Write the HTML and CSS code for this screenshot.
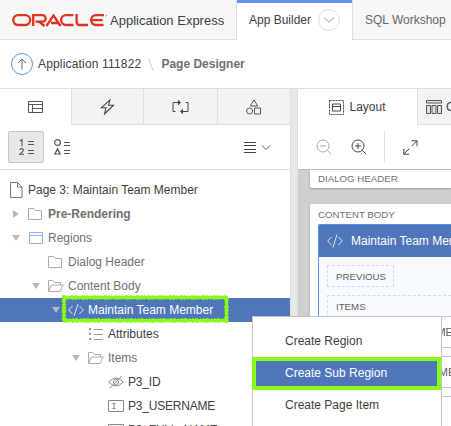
FILE: index.html
```html
<!DOCTYPE html>
<html lang="en">
<head>
<meta charset="utf-8">
<title>Page Designer</title>
<link rel="stylesheet" href="styles.css">
</head>
<body>
<div class="app">
<header class="topbar">
  <div class="brand">
    <svg class="logo" width="96" height="13" viewBox="0 0 96 13" role="img" aria-label="Oracle"><g fill="none" stroke="#e1301e" stroke-width="2.3"><rect x="1.2" y="1.2" width="17" height="9.8" rx="4.9"/><path d="M21.2 12V1.2H30.5a2.9 2.9 0 0 1 0 6.4H23.5M27 7.6L32.5 12"/><path d="M34.5 12L41.5 1.4L48.5 12M39 9H47"/><path d="M61.5 1.2H54a4.9 4.9 0 0 0 0 9.8h7.5"/><path d="M64.6 0V8a3 3 0 0 0 3 3H76"/><path d="M92 1.2H84a4.9 4.9 0 0 0 0 9.8H91.5M80 6.1H90.5"/></g><circle cx="94.4" cy="1.5" r=".9" fill="#e8968e"/></svg>
    <span class="product">Application Express</span>
  </div>
  <nav class="nav">
    <div class="nav-tab active">App Builder<span class="round"><svg width="12" height="8" viewBox="0 0 12 8"><path d="M1 1.5L6 6L11 1.5" fill="none" stroke="#999"/></svg></span></div>
    <div class="nav-tab">SQL Workshop</div>
  </nav>
</header>
<div class="crumbs">
  <span class="up"><svg width="10" height="12" viewBox="0 0 10 12"><path d="M5 11.5V1M1 5L5 1L9 5" fill="none" stroke="#666"/></svg></span>
  <span class="crumb-app">Application 111822</span>
  <svg class="slash" width="6" height="13" viewBox="0 0 6 13"><path d="M.7 .5L5 12.5" stroke="#ccc"/></svg>
  <b>Page Designer</b>
</div>
<main class="panes">
  <section class="left">
    <div class="tabs">
      <div class="tab on"><svg width="15" height="12" viewBox="0 0 15 12"><path d="M.5 .5h14v11H.5zM.5 3.5h14M4.5 3.5v8M4.5 7.5h10" fill="none" stroke="#555"/></svg></div>
      <div class="tab"><svg width="15" height="16" viewBox="0 0 15 16"><path d="M10 .8L1.2 8.8L6 8.8L4.5 15L13.5 6.2H8.6z" fill="none" stroke="#444" stroke-width="1.1"/></svg></div>
      <div class="tab"><svg width="17" height="16" viewBox="0 0 17 16"><path d="M3.5 12.5H1V3.5H7M13.5 3.5H16V12.5H10" fill="none" stroke="#444"/><path d="M6 .8L9 3.5L6 6.2zM11 9.8L8 12.5L11 15.2z" fill="#444"/></svg></div>
      <div class="tab"><svg width="16" height="16" viewBox="0 0 16 16"><path d="M8 1L11.8 7H4.2zM8.5 9h6v6h-6z" fill="none" stroke="#555"/><circle cx="3.6" cy="12" r="3" fill="none" stroke="#555"/></svg></div>
    </div>
    <div class="tools">
      <span class="pressed"><svg width="16" height="18" viewBox="0 0 16 18"><path d="M9 3.5h6M9 6.5h6M9 12.5h6M9 15.5h6" stroke="#555"/><path d="M1 3L3 1.6V8.4M.8 11.9Q1.2 10.6 2.7 10.6Q4.6 10.6 4.3 12.4Q4 13.8 .8 16.2H5" fill="none" stroke="#555" stroke-width="1.1"/></svg></span>
      <svg class="kinds" width="16" height="18" viewBox="0 0 16 18"><path d="M10 4.5h6M10 7.5h6M10 12.5h6M10 15.5h6" stroke="#555"/><circle cx="3.5" cy="4.5" r="2.9" fill="none" stroke="#555" stroke-width="1.2"/><path d="M3.5 10.7L6.2 16H.8z" fill="none" stroke="#555" stroke-width="1.2"/></svg>
      <svg class="menu-icon" width="27" height="11" viewBox="0 0 27 11"><path d="M0 .5h12M0 3.5h12M0 7.5h12M0 10.5h12" stroke="#444"/><path d="M18 3.5L22 7.5L26 3.5" fill="none" stroke="#555"/></svg>
    </div>
    <div class="tree">
      <div class="row root dark"><svg class="file" width="13" height="16" viewBox="0 0 13 16"><path d="M.5 .5h7l4.5 4.5v10.5H.5zM7.5 .5V5H12" fill="none" stroke="#777"/></svg>Page 3: Maintain Team Member</div>
      <div class="row l1"><i class="arrow shut"></i><svg class="ico" width="16" height="14" viewBox="0 0 16 14"><path d="M.5 1.5h5l2 2h6v9H.5z" fill="none" stroke="#aaa"/></svg><b>Pre-Rendering</b></div>
      <div class="row l1"><i class="arrow"></i><svg class="ico" width="16" height="14" viewBox="0 0 16 14"><path d="M1.5 1.5h13v11h-13zM1.5 4.5h13" fill="none" stroke="#8fb2ee"/></svg>Regions</div>
      <div class="row l2"><i class="arrow none"></i><svg class="ico" width="16" height="14" viewBox="0 0 16 14"><path d="M.5 1.5h5l2 2h6v9H.5z" fill="none" stroke="#aaa"/></svg>Dialog Header</div>
      <div class="row l2"><i class="arrow"></i><svg class="ico" width="16" height="14" viewBox="0 0 16 14"><path d="M.5 12.5v-11h4l2 2h6v2.5M.5 12.5L3.5 6h11.5L12 12.5z" fill="none" stroke="#aaa"/></svg>Content Body</div>
      <div class="row l3 selected"><i class="arrow"></i><svg class="ico" width="16" height="14" viewBox="0 0 16 14"><path d="M4.5 3L.7 7L4.5 11M11.5 3L15.3 7L11.5 11M10 1L6 13" fill="none" stroke="#dce7fb"/></svg>Maintain Team Member
        <svg class="marker" width="170" height="30" viewBox="0 0 170 30"><g fill="none" stroke="#88fb18"><rect x="3" y="3.5" width="162.5" height="23" stroke-width="3"/><rect x="3" y="3.5" width="162.5" height="23" stroke-width="4.4" stroke-dasharray="2 1.6 1 2.3 3 1"/></g></svg></div>
      <div class="row l4 dark"><i class="arrow none"></i><svg class="ico" width="16" height="14" viewBox="0 0 16 14"><path d="M6 2.5h9M6 7.5h9M6 12.5h9" stroke="#999"/><path d="M1 2h2M1 7h2M1 12h2" stroke="#999" stroke-width="2"/></svg>Attributes</div>
      <div class="row l4"><i class="arrow"></i><svg class="ico" width="16" height="14" viewBox="0 0 16 14"><path d="M.5 12.5v-11h4l2 2h6v2.5M.5 12.5L3.5 6h11.5L12 12.5z" fill="none" stroke="#aaa"/></svg>Items</div>
      <div class="row l5 dark"><i class="arrow none"></i><svg class="ico" width="16" height="14" viewBox="0 0 16 14"><path d="M.7 7Q8-1 15.3 7Q8 15 .7 7zM14 .8L2 13.2" fill="none" stroke="#888"/><circle cx="8" cy="7" r="2.5" fill="none" stroke="#888"/></svg>P3_ID</div>
      <div class="row l5 dark"><i class="arrow none"></i><svg class="ico" width="16" height="14" viewBox="0 0 16 14"><path d="M.5 1.5h15v11H.5zM4.5 4.5h3M6 4.5v5M4.5 9.5h3" fill="none" stroke="#888"/></svg>P3_USERNAME</div>
      <div class="row l5 dark"><i class="arrow none"></i><svg class="ico" width="16" height="14" viewBox="0 0 16 14"><path d="M.5 1.5h15v11H.5z" fill="none" stroke="#888"/></svg>P3_FULL_NAME</div>
    </div>
  </section>
  <div class="splitter"></div>
  <section class="right">
    <div class="tabs">
      <div class="tab on layout"><svg width="15" height="15" viewBox="0 0 15 15"><rect x=".5" y=".5" width="14" height="14" fill="none" stroke="#444" stroke-dasharray="2 1"/><path d="M3.5 4h8v7h-8zM3.5 6.5h8" fill="none" stroke="#444"/></svg>Layout</div>
      <div class="tab comp"><svg width="17" height="15" viewBox="0 0 17 15"><path d="M.5 1.5h15v2.5H.5zM.5 6.5h4v8h-4zM6 6.5h4v8H6zM11.5 6.5h4v8h-4z" fill="#dfe3df" stroke="#555"/></svg>Component View</div>
    </div>
    <div class="tools">
      <svg class="zoom-out" width="16" height="16" viewBox="0 0 16 16"><circle cx="7" cy="7" r="6" fill="none" stroke="#aaa"/><path d="M4 7h6M11.2 11.2L15.3 15.3" stroke="#aaa"/></svg>
      <svg class="zoom-in" width="16" height="16" viewBox="0 0 16 16"><circle cx="7" cy="7" r="6" fill="none" stroke="#444"/><path d="M4 7h6M7 4v6M11.2 11.2L15.3 15.3" stroke="#444"/></svg>
      <i class="rule"></i>
      <svg class="expand" width="15" height="15" viewBox="0 0 15 15"><path d="M8.5 .8H14V6.3M14 .8L8.5 6.3M.8 8.7V14.2H6.3M.8 14.2L6.3 8.7" fill="none" stroke="#444"/></svg>
    </div>
    <div class="canvas">
      <div class="card head">DIALOG HEADER</div>
      <div class="card body">
        <div class="label">CONTENT BODY</div>
        <div class="region">
          <div class="region-title"><svg width="16" height="14" viewBox="0 0 16 14"><path d="M4.5 3L.7 7L4.5 11M11.5 3L15.3 7L11.5 11M10 .5L6 13.5" fill="none" stroke="#dce7fb"/></svg>Maintain Team Member</div>
          <div class="region-body">
            <div class="slot prev">PREVIOUS</div>
            <div class="slot items"><div class="items-label">ITEMS</div>
              <div class="item">P3_USERNAME</div>
              <div class="item">P3_FULL_NAME</div>
              <div class="item"></div>
            </div>
          </div>
        </div>
      </div>
    </div>
  </section>
</main>
<div class="context">
  <div class="choice">Create Region</div>
  <div class="choice current">Create Sub Region</div>
  <div class="choice">Create Page Item</div>
</div>
</div>
</body>
</html>
```
FILE: styles.css
```css
* { box-sizing: border-box; }
body { margin: 0; background: #fff; color: #404040; font: 12px/24px "Liberation Sans", Arial, sans-serif; }
svg { flex: none; display: block; }
.app { width: 451px; height: 426px; overflow: hidden; position: relative; }
.topbar { height: 40px; display: flex; background: #f7f7f7; }
.brand { width: 236px; flex: none; display: flex; padding-left: 12px; border-bottom: 1px solid #dedede; }
.logo { margin-top: 14px; }
.product { font-size: 13px; line-height: 41px; margin-left: 2px; white-space: nowrap; }
.nav { display: flex; flex: 1; }
.nav-tab { flex: 1; padding-left: 12px; line-height: 40px; color: #666; border-bottom: 1px solid #dedede; white-space: nowrap; }
.nav-tab.active { flex: 0 0 117px; display: flex; background: #fff; color: #404040; border: 1px solid #dedede; border-width: 0 1px; box-shadow: inset 0 3px #6495e8; }
.round { width: 22px; height: 22px; margin: 9px 0 0 7px; border: 1px solid #dedede; border-radius: 50%; display: flex; align-items: center; justify-content: center; }
.crumbs { height: 48px; display: flex; align-items: center; padding-left: 11px; }
.crumbs b { color: #707070; margin-left: 7px; }
.up { width: 22px; height: 22px; border: 1px solid #5c91ee; border-radius: 50%; display: flex; align-items: center; justify-content: center; }
.crumb-app { margin-left: 5px; letter-spacing: .17px; }
.slash { margin-left: 7px; }
.panes { height: 338px; display: flex; border-top: 1px solid #dedede; }
.left { width: 290px; flex: none; }
.right { flex: 1; min-width: 0; }
.splitter { width: 8px; flex: none; background: #e8e8e8; border: 1px solid #dedede; border-top: 0; border-bottom: 0; }
.tabs { display: flex; height: 36px; }
.tab { flex: 1; display: flex; align-items: center; justify-content: center; background: #f3f3f3; border-bottom: 1px solid #dedede; border-left: 1px solid #dedede; }
.tab.on { background: #fff; border: 0; }
.left .tab.on { flex: 0 0 71px; }
.left .tab:nth-child(2) { flex: 0 0 72px; }
.tab.layout { flex: 0 0 119px; gap: 5px; }
.tab.comp { flex: none; width: 140px; justify-content: flex-start; padding-left: 8px; gap: 3px; white-space: nowrap; }
.right .tabs { overflow: hidden; }
.tools { height: 45px; display: flex; align-items: flex-start; border-bottom: 1px solid #dedede; }
.pressed { width: 36px; height: 32px; margin: 6px 0 0 8px; padding: 6px 0 0 10px; background: #e8e8e8; border: 1px solid #c6c6c6; border-radius: 2px; }
.kinds { margin: 13px 0 0 10px; }
.menu-icon { margin: 17px 0 0 174px; }
.right .tools { border-color: #bdbdbd; }
.zoom-out { margin: 14px 0 0 18px; }
.zoom-in { margin: 14px 0 0 19px; }
.rule { width: 1px; height: 32px; margin: 6px 0 0 17px; background: #dedede; }
.expand { margin: 15px 0 0 18px; }
.tree { padding-top: 8px; }
.row { height: 24px; display: flex; align-items: center; color: #707070; white-space: nowrap; position: relative; }
.row b { color: #707070; }
.row.dark { color: #404040; }
.root { padding-left: 10px; }
.file { margin-right: 5px; }
.arrow { width: 8px; height: 6px; flex: none; background: #bbb; clip-path: polygon(0 0, 100% 0, 50% 100%); margin-right: 8px; }
.arrow.shut { width: 6px; height: 8px; margin: 0 9px 0 1px; clip-path: polygon(0 0, 100% 50%, 0 100%); }
.arrow.none { visibility: hidden; }
.ico { margin-right: 4px; }
.l1 { padding-left: 12px; }
.l2 { padding-left: 32px; }
.l3 { padding-left: 52px; }
.l4 { padding-left: 72px; }
.l5 { padding-left: 92px; letter-spacing: -.2px; }
.row.selected { background: #4f76bb; color: #fff; }
.marker { position: absolute; left: 61px; top: -4px; z-index: 1; }
.canvas { height: 256px; background: #cfcfcf; padding-left: 12px; overflow: hidden; }
.card { background: #fff; padding-left: 8px; color: #707070; font-size: 9.7px; box-shadow: 0 1px 2px #999; white-space: nowrap; }
.head { height: 18px; line-height: 17px; border-radius: 0 0 0 2px; margin-bottom: 16px; }
.body { height: 240px; border-radius: 2px 0 0 0; }
.label { height: 20px; line-height: 21px; }
.region { border-left: 1px solid #5b8fea; background: #f7fbff; height: 220px; border-radius: 2px 0 0 0; overflow: hidden; }
.region-title { height: 33px; display: flex; align-items: center; gap: 8px; padding-left: 8px; background: #4f76bb; border-top: 1px solid #5b8fea; color: #fff; font-size: 12px; }
.region-body { padding: 8px 0 0 8px; }
.slot { border: 1px dashed #c7dcfb; padding-left: 8px; color: #606060; }
.prev { width: 67px; height: 22px; line-height: 21px; margin-bottom: 8px; }
.items { width: 200px; height: 140px; }
.items-label { height: 20px; line-height: 22px; }
.item { width: 160px; height: 32px; line-height: 30px; margin-bottom: 8px; padding-left: 34px; background: #fff; border: 1px solid #c6c6c6; font-size: 11px; }
.context { position: absolute; left: 252px; top: 316px; width: 190px; height: 120px; padding-top: 8px; background: #fff; border: 1px solid #c6c6c6; }
.choice { height: 32px; line-height: 33px; padding-left: 32px; }
.current { height: 33px; margin: 0 0 -1px -1px; padding-left: 29px; line-height: 24px; background: #4f76bb; color: #fff; border: 4px solid #88fb18; }
```
